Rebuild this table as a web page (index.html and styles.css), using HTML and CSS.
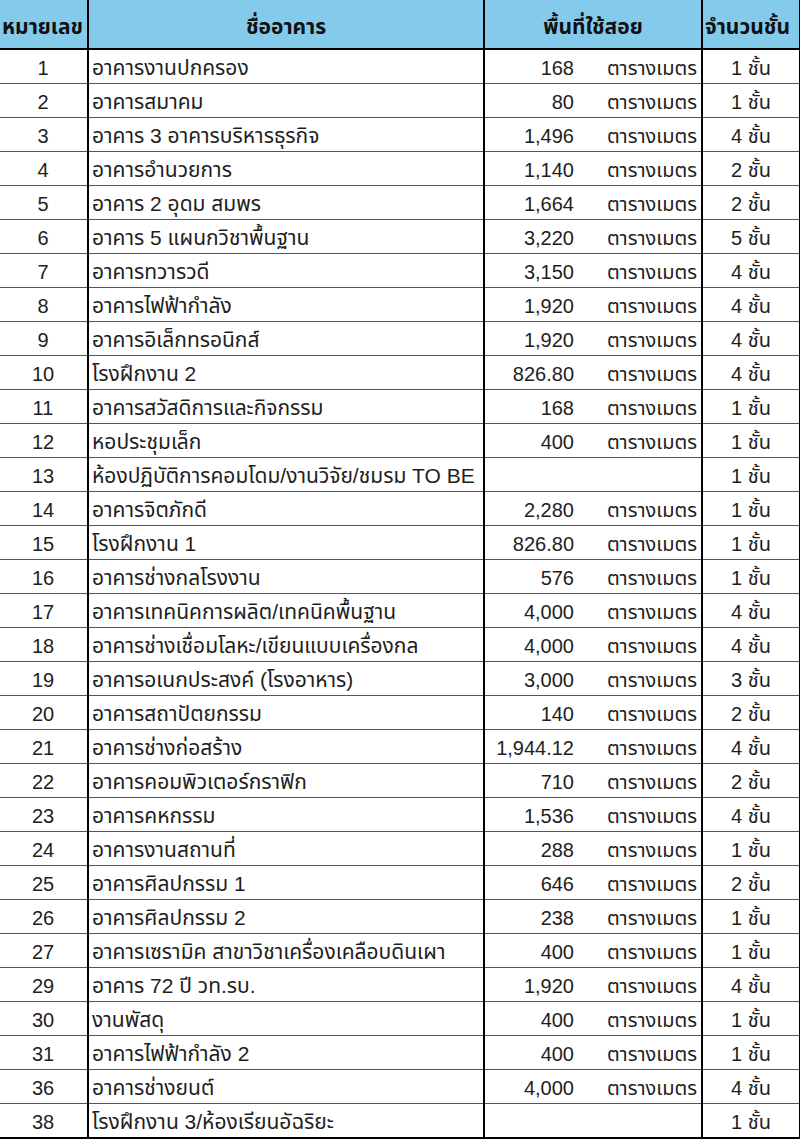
FILE: index.html
```html
<!DOCTYPE html>
<html lang="th">
<head>
<meta charset="utf-8">
<title>อาคาร</title>
<link rel="stylesheet" href="styles.css">
</head>
<body>
<table class="sheet">
  <colgroup>
    <col class="c-num">
    <col class="c-name">
    <col class="c-area">
    <col class="c-unit">
    <col class="c-floor">
  </colgroup>
  <thead>
    <tr>
      <th class="h-num">หมายเลข</th>
      <th>ชื่ออาคาร</th>
      <th colspan="2">พื้นที่ใช้สอย</th>
      <th class="h-floor">จำนวนชั้น</th>
    </tr>
  </thead>
  <tbody>
    <tr><td class="num">1</td><td class="name">อาคารงานปกครอง</td><td class="area">168</td><td class="unit">ตารางเมตร</td><td class="floor">1 ชั้น</td></tr>
    <tr><td class="num">2</td><td class="name">อาคารสมาคม</td><td class="area">80</td><td class="unit">ตารางเมตร</td><td class="floor">1 ชั้น</td></tr>
    <tr><td class="num">3</td><td class="name">อาคาร 3 อาคารบริหารธุรกิจ</td><td class="area">1,496</td><td class="unit">ตารางเมตร</td><td class="floor">4 ชั้น</td></tr>
    <tr><td class="num">4</td><td class="name">อาคารอำนวยการ</td><td class="area">1,140</td><td class="unit">ตารางเมตร</td><td class="floor">2 ชั้น</td></tr>
    <tr><td class="num">5</td><td class="name">อาคาร 2 อุดม สมพร</td><td class="area">1,664</td><td class="unit">ตารางเมตร</td><td class="floor">2 ชั้น</td></tr>
    <tr><td class="num">6</td><td class="name">อาคาร 5 แผนกวิชาพื้นฐาน</td><td class="area">3,220</td><td class="unit">ตารางเมตร</td><td class="floor">5 ชั้น</td></tr>
    <tr><td class="num">7</td><td class="name">อาคารทวารวดี</td><td class="area">3,150</td><td class="unit">ตารางเมตร</td><td class="floor">4 ชั้น</td></tr>
    <tr><td class="num">8</td><td class="name">อาคารไฟฟ้ากำลัง</td><td class="area">1,920</td><td class="unit">ตารางเมตร</td><td class="floor">4 ชั้น</td></tr>
    <tr><td class="num">9</td><td class="name">อาคารอิเล็กทรอนิกส์</td><td class="area">1,920</td><td class="unit">ตารางเมตร</td><td class="floor">4 ชั้น</td></tr>
    <tr><td class="num">10</td><td class="name">โรงฝึกงาน 2</td><td class="area">826.80</td><td class="unit">ตารางเมตร</td><td class="floor">4 ชั้น</td></tr>
    <tr><td class="num">11</td><td class="name">อาคารสวัสดิการและกิจกรรม</td><td class="area">168</td><td class="unit">ตารางเมตร</td><td class="floor">1 ชั้น</td></tr>
    <tr><td class="num">12</td><td class="name">หอประชุมเล็ก</td><td class="area">400</td><td class="unit">ตารางเมตร</td><td class="floor">1 ชั้น</td></tr>
    <tr><td class="num">13</td><td class="name">ห้องปฏิบัติการคอมโดม/งานวิจัย/ชมรม TO BE</td><td class="area"></td><td class="unit"></td><td class="floor">1 ชั้น</td></tr>
    <tr><td class="num">14</td><td class="name">อาคารจิตภักดี</td><td class="area">2,280</td><td class="unit">ตารางเมตร</td><td class="floor">1 ชั้น</td></tr>
    <tr><td class="num">15</td><td class="name">โรงฝึกงาน 1</td><td class="area">826.80</td><td class="unit">ตารางเมตร</td><td class="floor">1 ชั้น</td></tr>
    <tr><td class="num">16</td><td class="name">อาคารช่างกลโรงงาน</td><td class="area">576</td><td class="unit">ตารางเมตร</td><td class="floor">1 ชั้น</td></tr>
    <tr><td class="num">17</td><td class="name">อาคารเทคนิคการผลิต/เทคนิคพื้นฐาน</td><td class="area">4,000</td><td class="unit">ตารางเมตร</td><td class="floor">4 ชั้น</td></tr>
    <tr><td class="num">18</td><td class="name">อาคารช่างเชื่อมโลหะ/เขียนแบบเครื่องกล</td><td class="area">4,000</td><td class="unit">ตารางเมตร</td><td class="floor">4 ชั้น</td></tr>
    <tr><td class="num">19</td><td class="name">อาคารอเนกประสงค์ (โรงอาหาร)</td><td class="area">3,000</td><td class="unit">ตารางเมตร</td><td class="floor">3 ชั้น</td></tr>
    <tr><td class="num">20</td><td class="name">อาคารสถาปัตยกรรม</td><td class="area">140</td><td class="unit">ตารางเมตร</td><td class="floor">2 ชั้น</td></tr>
    <tr><td class="num">21</td><td class="name">อาคารช่างก่อสร้าง</td><td class="area">1,944.12</td><td class="unit">ตารางเมตร</td><td class="floor">4 ชั้น</td></tr>
    <tr><td class="num">22</td><td class="name">อาคารคอมพิวเตอร์กราฟิก</td><td class="area">710</td><td class="unit">ตารางเมตร</td><td class="floor">2 ชั้น</td></tr>
    <tr><td class="num">23</td><td class="name">อาคารคหกรรม</td><td class="area">1,536</td><td class="unit">ตารางเมตร</td><td class="floor">4 ชั้น</td></tr>
    <tr><td class="num">24</td><td class="name">อาคารงานสถานที่</td><td class="area">288</td><td class="unit">ตารางเมตร</td><td class="floor">1 ชั้น</td></tr>
    <tr><td class="num">25</td><td class="name">อาคารศิลปกรรม 1</td><td class="area">646</td><td class="unit">ตารางเมตร</td><td class="floor">2 ชั้น</td></tr>
    <tr><td class="num">26</td><td class="name">อาคารศิลปกรรม 2</td><td class="area">238</td><td class="unit">ตารางเมตร</td><td class="floor">1 ชั้น</td></tr>
    <tr><td class="num">27</td><td class="name">อาคารเซรามิค สาขาวิชาเครื่องเคลือบดินเผา</td><td class="area">400</td><td class="unit">ตารางเมตร</td><td class="floor">1 ชั้น</td></tr>
    <tr><td class="num">29</td><td class="name">อาคาร 72 ปี วท.รบ.</td><td class="area">1,920</td><td class="unit">ตารางเมตร</td><td class="floor">4 ชั้น</td></tr>
    <tr><td class="num">30</td><td class="name">งานพัสดุ</td><td class="area">400</td><td class="unit">ตารางเมตร</td><td class="floor">1 ชั้น</td></tr>
    <tr><td class="num">31</td><td class="name">อาคารไฟฟ้ากำลัง 2</td><td class="area">400</td><td class="unit">ตารางเมตร</td><td class="floor">1 ชั้น</td></tr>
    <tr><td class="num">36</td><td class="name">อาคารช่างยนต์</td><td class="area">4,000</td><td class="unit">ตารางเมตร</td><td class="floor">4 ชั้น</td></tr>
    <tr><td class="num">38</td><td class="name">โรงฝึกงาน 3/ห้องเรียนอัฉริยะ</td><td class="area"></td><td class="unit"></td><td class="floor">1 ชั้น</td></tr>
  </tbody>
</table>
</body>
</html>
```

FILE: styles.css
```css
html, body {
  margin: 0;
  padding: 0;
  background: #ffffff;
}

body {
  font-family: "Liberation Sans", "Noto Sans Thai", "Noto Sans", "DejaVu Sans", sans-serif;
  color: #1e1e1e;
}

.sheet {
  border-collapse: collapse;
  table-layout: fixed;
  width: 801px;
  margin-left: -1px;
}

.c-num { width: 89px; }
.c-name { width: 396px; }
.c-area { width: 98px; }
.c-unit { width: 120px; }
.c-floor { width: 98px; }

.sheet th {
  background: #84cbeb;
  height: 40px;
  padding: 0 0 8px 0;
  font-size: 21px;
  line-height: 26px;
  font-weight: bold;
  color: #111;
  text-align: center;
  vertical-align: bottom;
  border-left: 2px solid #000;
  border-right: 2px solid #000;
  border-bottom: 2px solid #000;
  white-space: nowrap;
  overflow: hidden;
}

.sheet th.h-num {
  text-align: left;
  padding-left: 3px;
  border-left: none;
}

.sheet th.h-floor {
  text-align: left;
  padding-left: 2px;
}

.sheet td {
  height: 30px;
  padding: 0 0 3px 0;
  font-size: 20px;
  line-height: 24px;
  vertical-align: bottom;
  border-bottom: 1px solid #555;
  white-space: nowrap;
  overflow: hidden;
}

.sheet tbody tr:last-child td {
  border-bottom: 2px solid #000;
}

.sheet .num {
  text-align: center;
  border-right: 2px solid #000;
}

.sheet .name {
  font-size: 21px;
  padding-left: 3px;
  border-right: 2px solid #000;
}

.sheet .area {
  text-align: right;
  padding-right: 8px;
}

.sheet .unit {
  text-align: right;
  padding-right: 4px;
  border-right: 2px solid #000;
}

.sheet .floor {
  text-align: center;
  border-right: 2px solid #000;
}
```
